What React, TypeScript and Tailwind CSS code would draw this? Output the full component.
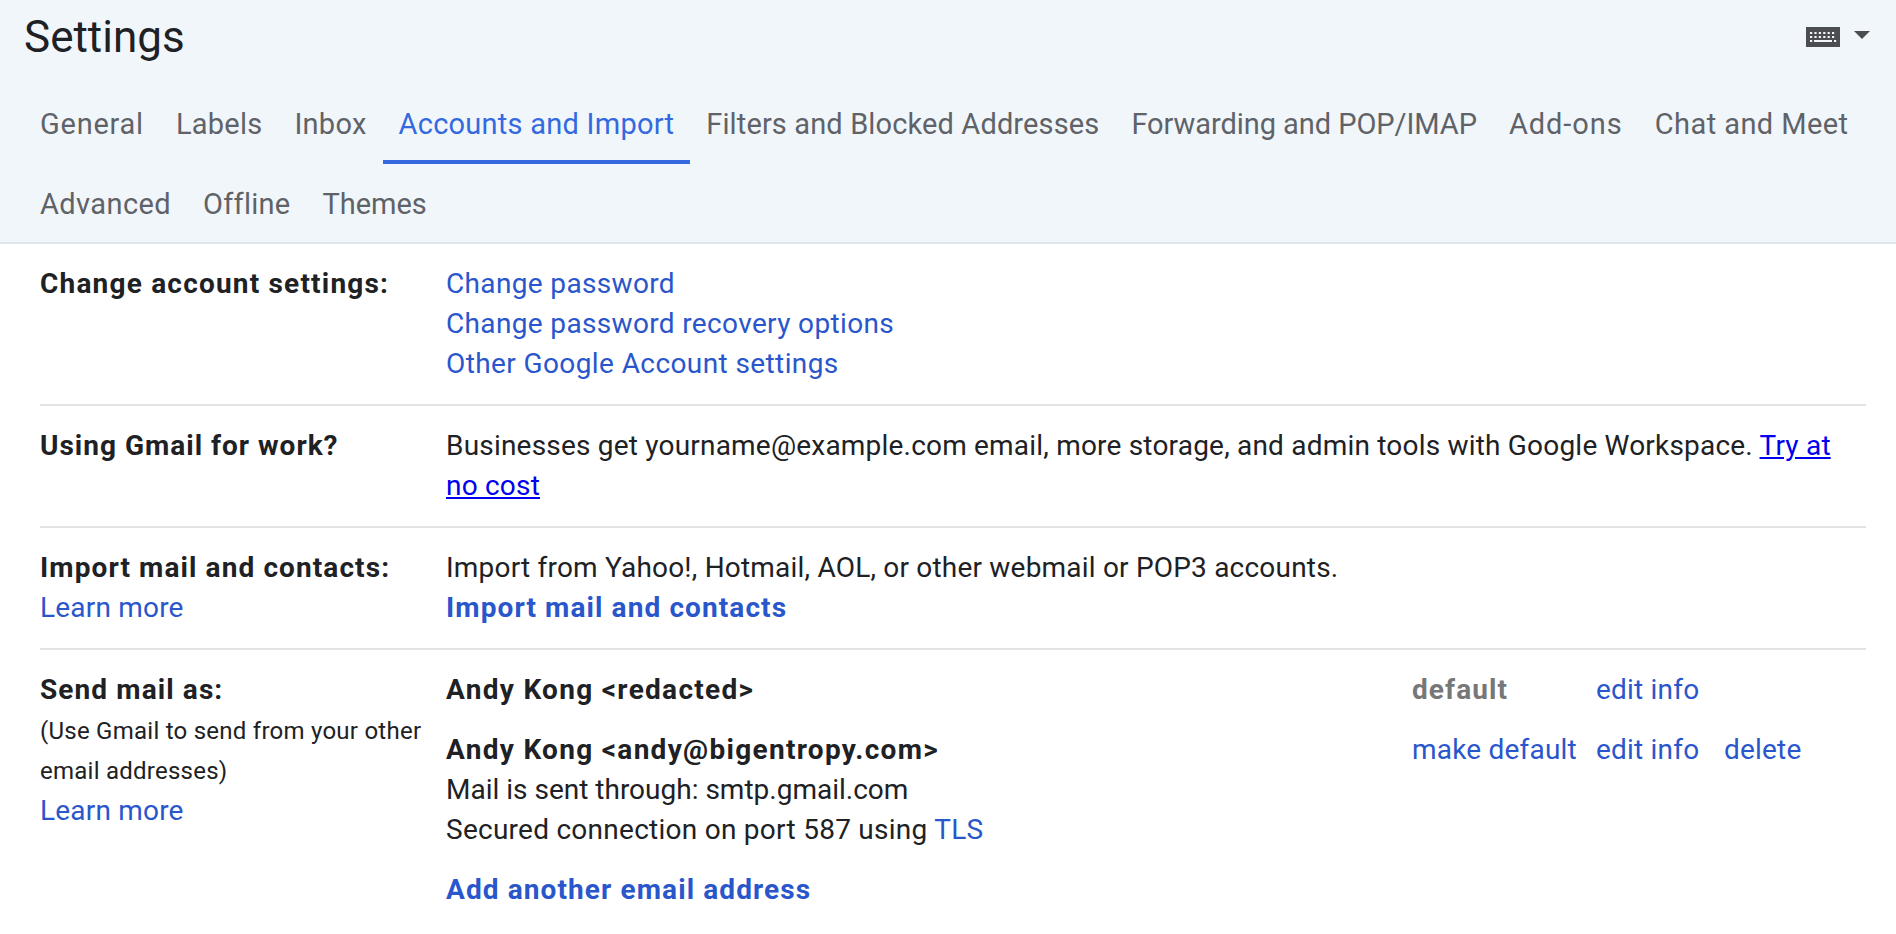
const F = "font-['Roboto','Inter',sans-serif]";
function KB() {
  return (
    <svg width="34" height="20" viewBox="0 0 34 20" className="block">
      <rect width="34" height="20" fill="#4b4d50" />
      <g fill="#f2f6fc">
        {[0, 1, 2, 3, 4, 5].map((i) => (
          <g key={i}>
            <rect x={4 + i * 4.4} y="5" width="2.2" height="2" />
            <rect x={4 + i * 4.4} y="9" width="2.2" height="2" />
          </g>
        ))}
        <rect x="4" y="13" width="2.2" height="2" />
        <rect x="8" y="13" width="18" height="2" />
        <rect x="28" y="13" width="2.2" height="2" />
      </g>
    </svg>
  );
}
const row1: [string, string][] = [
  ["General", "tracking-[0.75px]"],
  ["Labels", "tracking-[0.25px]"],
  ["Inbox", "tracking-[0.25px]"],
  ["Accounts and Import", "tracking-[0.25px]"],
  ["Filters and Blocked Addresses", "tracking-[0.13px]"],
  ["Forwarding and POP/IMAP", "tracking-[-0.06px]"],
  ["Add-ons", "tracking-[0.95px]"],
  ["Chat and Meet", "tracking-[0.43px]"],
];
const row2: [string, string][] = [
  ["Advanced", "tracking-[0.4px]"],
  ["Offline", "tracking-[0.25px]"],
  ["Themes", "tracking-[0px]"],
];
function Tab({ t, c }: { t: string; c: string }) {
  const active = t === "Accounts and Import";
  return (
    <div className={`${c} ${active ? "h-20 px-4 pt-1 flex items-center text-[#3569e0] border-b-4 border-[#3569e0] whitespace-nowrap" : "h-20 px-4 flex items-center text-[#5f6368] whitespace-nowrap"}`}>
      {t}
    </div>
  );
}
const link = "text-[#2a56cc]";
const bold = "font-bold tracking-[1.1px]";
export default function App() {
  return (
    <div className={`${F} w-[1896px] h-[934px] overflow-hidden bg-white text-[#202124] text-[28px] leading-[40px] tracking-[0.2px]`}>
      <div className="h-[244px] bg-[#f1f6fb] border-b-2 border-[#dfe5ec]">
        <div className="h-[74px] pl-6 pr-[26px] flex items-center justify-between">
          <div className="text-[44px] leading-[48px] tracking-normal">Settings</div>
          <div className="flex items-center gap-[14px]">
            <KB />
            <div className="w-0 h-0 border-x-[8px] border-x-transparent border-t-[8px] border-t-[#4b4d50] mb-1" />
          </div>
        </div>
        <div className="pl-6 flex text-[29px] mt-[10px]">
          {row1.map(([t, c]) => <Tab key={t} t={t} c={c} />)}
        </div>
        <div className="pl-6 flex text-[29px]">
          {row2.map(([t, c]) => <Tab key={t} t={t} c={c} />)}
        </div>
      </div>
      <div className="ml-10 mr-[30px]">
        <div className="flex border-b-2 border-[#e3e3e3] pt-5 pb-[20px]">
          <div className="w-[406px] font-bold tracking-[1.2px]">Change account settings:</div>
          <div className={`flex flex-col ${link} tracking-[0.35px]`}>
            <span>Change password</span>
            <span>Change password recovery options</span>
            <span className="tracking-[0.4px]">Other Google Account settings</span>
          </div>
        </div>
        <div className="flex border-b-2 border-[#e3e3e3] pt-5 pb-[20px]">
          <div className="w-[406px] shrink-0 font-bold tracking-[1px]">Using Gmail for work?</div>
          <div>
            Businesses get yourname@example.com email, more storage, and admin tools with Google Workspace.{" "}
            <span className="text-[#0000ee] underline">Try at no cost</span>
          </div>
        </div>
        <div className="flex border-b-2 border-[#e3e3e3] pt-5 pb-[20px]">
          <div className="w-[406px] shrink-0">
            <div className={bold}>Import mail and contacts:</div>
            <div className={link}>Learn more</div>
          </div>
          <div>
            <div>Import from Yahoo!, Hotmail, AOL, or other webmail or POP3 accounts.</div>
            <div className={`${link} ${bold}`}>Import mail and contacts</div>
          </div>
        </div>
        <div className="flex pt-5">
          <div className="w-[406px] shrink-0">
            <div className={bold}>Send mail as:</div>
            <div className="text-[24px] tracking-[0.25px] mt-px">(Use Gmail to send from your other</div>
            <div className="text-[24px] tracking-[0.25px]">email addresses)</div>
            <div className={link}>Learn more</div>
          </div>
          <div className="flex-1">
            <div className="flex">
              <div className="w-[966px] font-bold tracking-[1.3px]">Andy Kong &lt;redacted&gt;</div>
              <div className={`w-[184px] ${bold} text-[#777777]`}>default</div>
              <div className={link}>edit info</div>
            </div>
            <div className="flex mt-5">
              <div className="w-[966px]">
                <div className="font-bold tracking-[1.3px]">Andy Kong &lt;andy@bigentropy.com&gt;</div>
                <div className="tracking-normal">Mail is sent through: smtp.gmail.com</div>
                <div className="tracking-[0.26px]">Secured connection on port 587 using <span className={link}>TLS</span></div>
              </div>
              <div className={`w-[184px] ${link}`}>make default</div>
              <div className={`w-[128px] ${link}`}>edit info</div>
              <div className={link}>delete</div>
            </div>
            <div className={`${link} ${bold} mt-5`}>Add another email address</div>
          </div>
        </div>
      </div>
    </div>
  );
}
